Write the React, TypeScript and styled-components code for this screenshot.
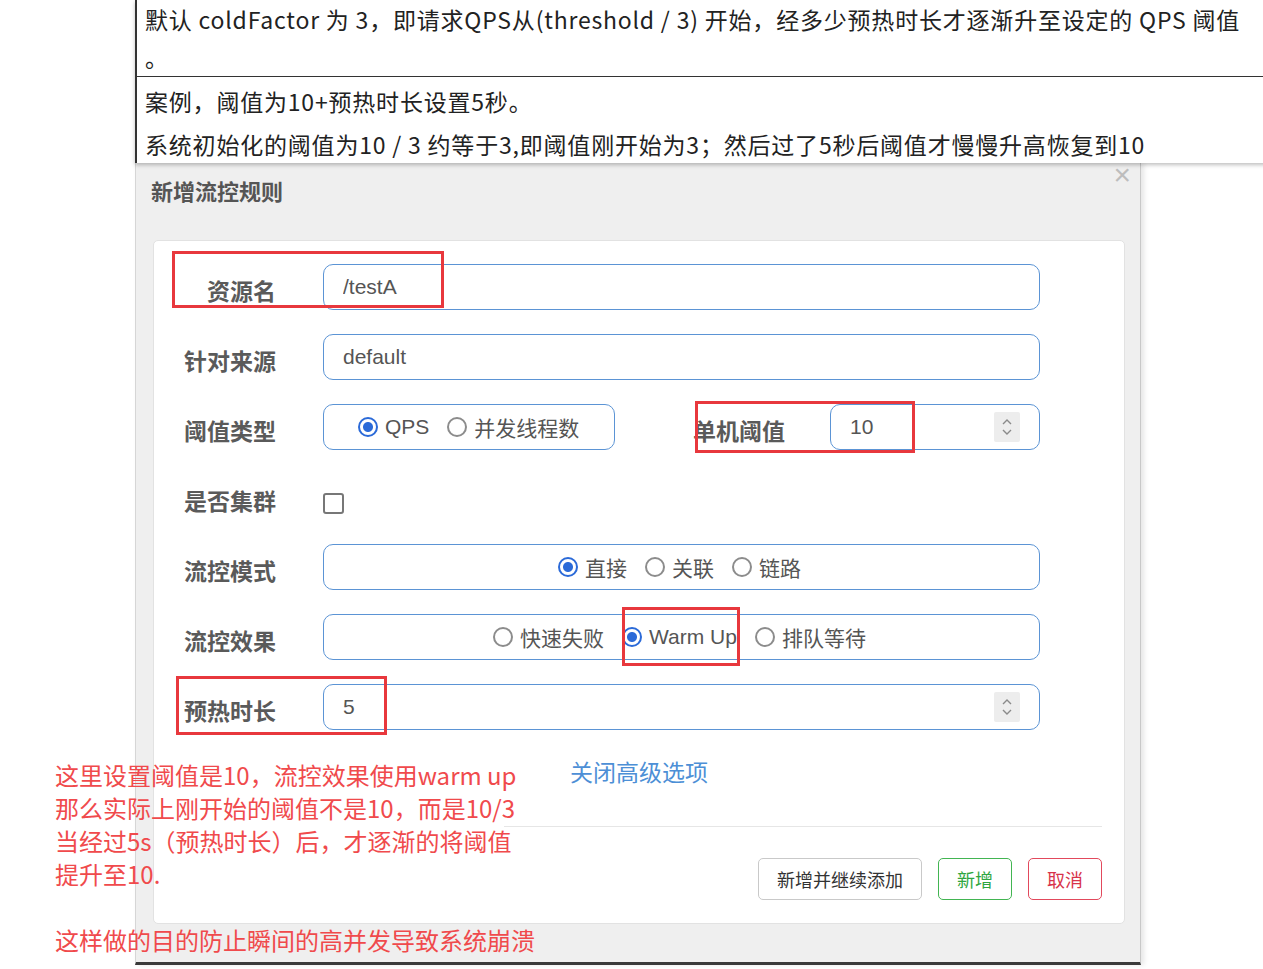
import React from 'react'
import styled, { createGlobalStyle } from 'styled-components'

const GlobalStyle = createGlobalStyle`
  html, body {
    margin: 0;
    padding: 0;
    background: #fff;
  }
  body {
    font-family: "Noto Sans CJK SC", "Noto Sans", sans-serif;
    overflow: hidden;
  }
  * {
    box-sizing: border-box;
  }
`

type Mark = { x: number; y: number; w: number; h: number }

const marks: Mark[] = [
  { x: 172, y: 251, w: 272, h: 57 },
  { x: 695, y: 401, w: 220, h: 52 },
  { x: 622, y: 607, w: 118, h: 59 },
  { x: 176, y: 676, w: 211, h: 59 },
]

function Spinner() {
  return (
    <SpinBox>
      <svg width="12" height="22" viewBox="0 0 12 22" fill="none">
        <path d="M2 8 L6 4 L10 8" stroke="#8a8a8a" strokeWidth="1.4" />
        <path d="M2 14 L6 18 L10 14" stroke="#8a8a8a" strokeWidth="1.4" />
      </svg>
    </SpinBox>
  )
}

function Radio({ checked, label }: { checked?: boolean; label: string }) {
  return (
    <RadioItem>
      <RadioDot $checked={!!checked} />
      <span>{label}</span>
    </RadioItem>
  )
}

export default function App() {
  return (
    <Page>
      <GlobalStyle />
      <Notes>
        <NoteRow $first>
          <NoteLine>
            默认 coldFactor 为 3，即请求QPS从(threshold / 3) 开始，经多少预热时长才逐渐升至设定的 QPS 阈值
          </NoteLine>
          <NoteLine>。</NoteLine>
        </NoteRow>
        <NoteRow>
          <NoteLine $gap={5}>案例，阈值为10+预热时长设置5秒。</NoteLine>
          <NoteLine>
            系统初始化的阈值为10 / 3 约等于3,即阈值刚开始为3；然后过了5秒后阈值才慢慢升高恢复到10
          </NoteLine>
        </NoteRow>
      </Notes>

      <Dialog>
        <Header>
          <Title>新增流控规则</Title>
          <Close>×</Close>
        </Header>
        <Panel>
          <Form>
            <Row>
              <Label>资源名</Label>
              <InputBox>
                <Input defaultValue="/testA" />
              </InputBox>
            </Row>
            <Row>
              <Label>针对来源</Label>
              <InputBox>
                <Input defaultValue="default" />
              </InputBox>
            </Row>
            <Row>
              <Label>阈值类型</Label>
              <RadioBox $width={292} $center={false}>
                <Radio checked label="QPS" />
                <Radio label="并发线程数" />
              </RadioBox>
              <SubLabel>单机阈值</SubLabel>
              <InputBox>
                <Input defaultValue="10" />
                <Spinner />
              </InputBox>
            </Row>
            <Row>
              <Label>是否集群</Label>
              <Checkbox />
            </Row>
            <Row>
              <Label>流控模式</Label>
              <RadioBox $center>
                <Radio checked label="直接" />
                <Radio label="关联" />
                <Radio label="链路" />
              </RadioBox>
            </Row>
            <Row>
              <Label>流控效果</Label>
              <RadioBox $center>
                <Radio label="快速失败" />
                <Radio checked label="Warm Up" />
                <Radio label="排队等待" />
              </RadioBox>
            </Row>
            <Row>
              <Label>预热时长</Label>
              <InputBox>
                <Input defaultValue="5" />
                <Spinner />
              </InputBox>
            </Row>
          </Form>
          <LinkRow>
            <ToggleLink>关闭高级选项</ToggleLink>
          </LinkRow>
          <Divider />
          <Footer>
            <Button>新增并继续添加</Button>
            <Button $tone="success">新增</Button>
            <Button $tone="danger">取消</Button>
          </Footer>
        </Panel>
      </Dialog>

      {marks.map((m, i) => (
        <RedBox key={i} $x={m.x} $y={m.y} $w={m.w} $h={m.h} />
      ))}

      <Annotation>
        <p>这里设置阈值是10，流控效果使用warm up</p>
        <p>那么实际上刚开始的阈值不是10，而是10/3</p>
        <p>当经过5s（预热时长）后，才逐渐的将阈值</p>
        <p>提升至10.</p>
        <p className="gap">这样做的目的防止瞬间的高并发导致系统崩溃</p>
      </Annotation>
    </Page>
  )
}

const Page = styled.div`
  position: relative;
  width: 1263px;
  height: 969px;
  overflow: hidden;
`

const Notes = styled.section`
  position: relative;
  z-index: 1;
  margin-left: 135px;
  width: 1140px;
  border-left: 2px solid #333;
  background: #fff;
  box-shadow: 0 2px 4px rgba(0, 0, 0, 0.25);
  color: #222;
  font-size: 23px;
  letter-spacing: 0.8px;
`

const NoteRow = styled.div<{ $first?: boolean }>`
  padding: ${(p) => (p.$first ? '0 8px' : '5px 8px 0')};
  border-bottom: ${(p) => (p.$first ? '1px solid #333' : 'none')};
`

const NoteLine = styled.p<{ $gap?: number }>`
  margin: 0 0 ${(p) => p.$gap ?? 0}px;
  line-height: 38px;
  white-space: nowrap;
`

const Dialog = styled.div`
  margin-left: 135px;
  width: 1006px;
  background: #efefef;
  border-left: 1px solid #d6d6d6;
  border-right: 1px solid #c8c8c8;
  border-bottom: 3px solid #3a3a3a;
  box-shadow: 3px 0 5px rgba(0, 0, 0, 0.1);
  padding: 13px 15px 38px 17px;
`

const Header = styled.div`
  display: flex;
  justify-content: space-between;
  align-items: flex-start;
  margin-bottom: 36px;
`

const Title = styled.h3`
  margin: 0 0 0 -2px;
  font-size: 22px;
  line-height: 28px;
  font-weight: 700;
  color: #555;
`

const Close = styled.span`
  margin: -16px -6px 0 0;
  font-family: "Liberation Sans", sans-serif;
  font-size: 30px;
  line-height: 30px;
  color: #bdbdbd;
`

const Panel = styled.div`
  background: #fff;
  border: 1px solid #e2e2e2;
  border-radius: 5px;
  padding: 23px 22px 23px 0;
`

const Form = styled.div`
  display: flex;
  flex-direction: column;
  gap: 24px;
  padding-right: 62px;
`

const Row = styled.div`
  display: flex;
  align-items: center;
  height: 46px;
`

const Label = styled.label`
  flex-shrink: 0;
  width: 122px;
  margin-right: 47px;
  padding-top: 5px;
  text-align: right;
  font-size: 23px;
  font-weight: 700;
  color: #5a5a5a;
  white-space: nowrap;
`

const SubLabel = styled(Label)`
  width: 170px;
  margin-right: 45px;
`

const InputBox = styled.div`
  flex: 1;
  min-width: 0;
  height: 46px;
  display: flex;
  align-items: center;
  padding: 0 19px;
  border: 1px solid #5b94d5;
  border-radius: 10px;
`

const Input = styled.input`
  flex: 1;
  min-width: 0;
  border: none;
  outline: none;
  background: transparent;
  padding: 0;
  font-family: "Liberation Sans", sans-serif;
  font-size: 21px;
  color: #555;
`

const SpinBox = styled.div`
  flex-shrink: 0;
  width: 26px;
  height: 30px;
  display: flex;
  align-items: center;
  justify-content: center;
  background: #ededed;
  border-radius: 2px;
`

const RadioBox = styled.div<{ $width?: number; $center: boolean }>`
  ${(p) => (p.$width ? `width: ${p.$width}px; flex-shrink: 0;` : 'flex: 1;')}
  height: 46px;
  display: flex;
  align-items: center;
  justify-content: ${(p) => (p.$center ? 'center' : 'flex-start')};
  gap: 18px;
  padding: ${(p) => (p.$center ? '0 4px 0 0' : '0 0 0 34px')};
  border: 1px solid #5b94d5;
  border-radius: 10px;
  font-family: "Liberation Sans", "Noto Sans CJK SC", sans-serif;
  font-size: 21px;
  color: #555;
`

const RadioItem = styled.span`
  display: flex;
  align-items: center;
  gap: 7px;
  white-space: nowrap;
`

const RadioDot = styled.span<{ $checked: boolean }>`
  flex-shrink: 0;
  width: 20px;
  height: 20px;
  border-radius: 50%;
  border: 2px solid ${(p) => (p.$checked ? '#2b6ad8' : '#8c8c8c')};
  background: ${(p) =>
    p.$checked
      ? 'radial-gradient(circle, #2b6ad8 0 4.5px, #fff 5.5px)'
      : '#fff'};
`

const Checkbox = styled.span`
  width: 21px;
  height: 21px;
  margin-top: 12px;
  border: 2px solid #777;
  border-radius: 3px;
  background: #fff;
`

const LinkRow = styled.div`
  display: flex;
  justify-content: center;
  margin: 26px 0 0 22px;
`

const ToggleLink = styled.a`
  font-size: 23px;
  line-height: 30px;
  color: #4d8fd6;
  cursor: pointer;
`

const Divider = styled.div`
  height: 1px;
  margin: 40px 0 0 350px;
  background: #e6e6e6;
`

const Footer = styled.div`
  display: flex;
  justify-content: flex-end;
  gap: 16px;
  margin-top: 31px;
`

const tones = {
  default: { border: '#c9c9c9', color: '#333' },
  success: { border: '#42b552', color: '#2fa640' },
  danger: { border: '#e2495c', color: '#d8334a' },
}

const Button = styled.button<{ $tone?: keyof typeof tones }>`
  height: 42px;
  padding: 0 18px;
  background: #fff;
  border: 1px solid ${(p) => tones[p.$tone ?? 'default'].border};
  border-radius: 5px;
  color: ${(p) => tones[p.$tone ?? 'default'].color};
  font-family: "Noto Sans CJK SC", sans-serif;
  font-size: 18px;
`

const RedBox = styled.div<{ $x: number; $y: number; $w: number; $h: number }>`
  position: absolute;
  left: ${(p) => p.$x}px;
  top: ${(p) => p.$y}px;
  width: ${(p) => p.$w}px;
  height: ${(p) => p.$h}px;
  border: 3px solid #e8383d;
  pointer-events: none;
`

const Annotation = styled.div`
  position: absolute;
  left: 55px;
  top: 758px;
  color: #f04a4c;
  font-size: 24px;
  line-height: 33px;

  p {
    margin: 0;
    white-space: nowrap;
  }

  .gap {
    margin-top: 33px;
  }
`
